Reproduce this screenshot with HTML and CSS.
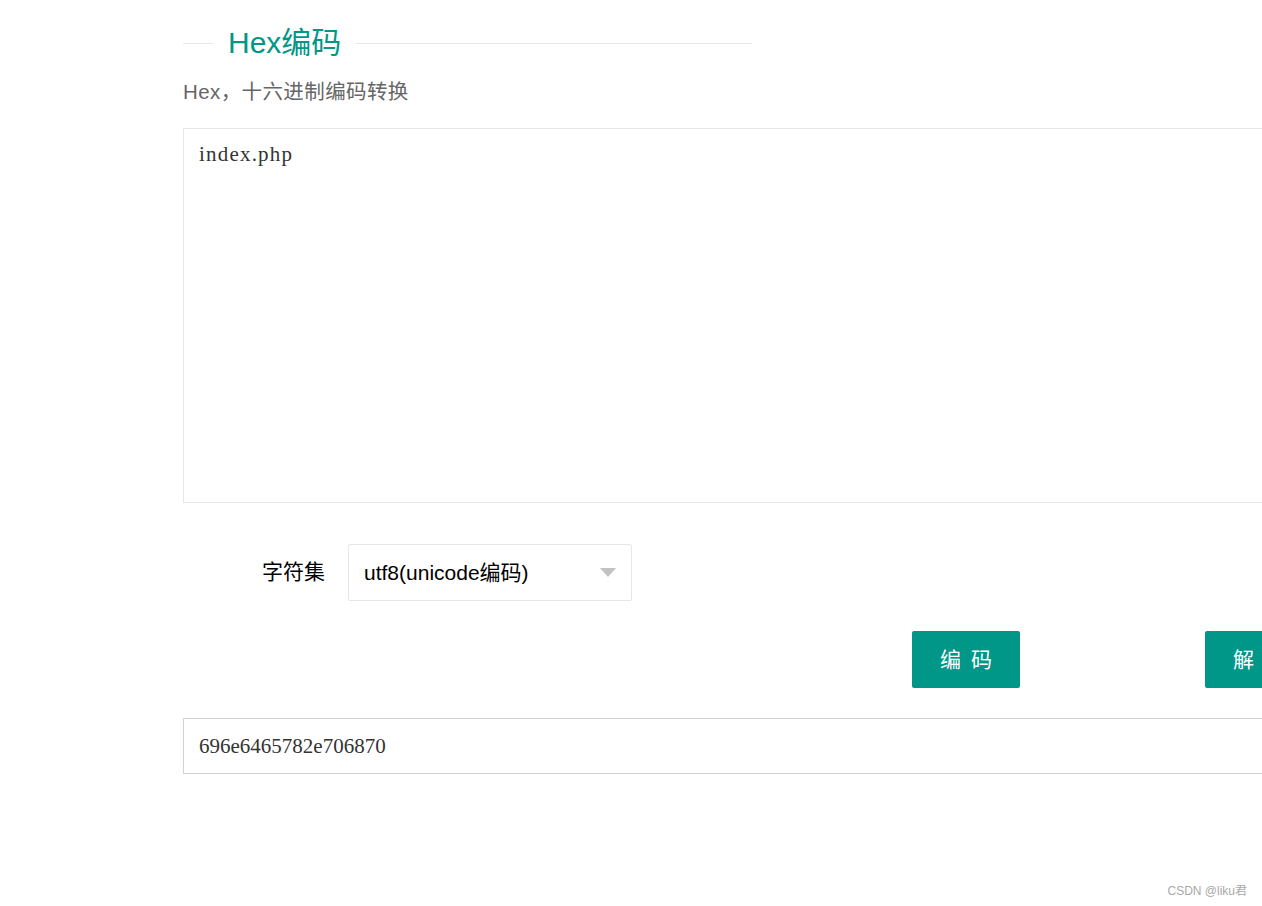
FILE: index.html
```html
<!DOCTYPE html>
<html>
  <head>
    <meta charset="utf-8">
    <link rel="stylesheet" href="styles.css">
    <title>Hex编码</title>
  </head>
  <body>
    <div id="content">
        <div class="legend">
            <span class="legend-line short"></span>
            <h2>Hex编码</h2>
            <span class="legend-line long"></span>
        </div>
        <p class="desc">Hex，十六进制编码转换</p>
        <textarea class="source">index.php</textarea>
        <div class="form-row">
            <label>字符集</label>
            <div class="select">
                <span>utf8(unicode编码)</span>
                <i class="caret"></i>
            </div>
        </div>
        <div class="actions">
            <button class="btn">编 码</button>
            <button class="btn">解 码</button>
        </div>
        <input class="result" value="696e6465782e706870">
    </div>
    <div class="watermark">CSDN @liku君</div>
  </body>
</html>
```

FILE: styles.css
```css
* {
    font-family: "Liberation Sans", "Noto Sans CJK SC", sans-serif;
    box-sizing: border-box;
}

html, body {
    overflow: hidden;
}

body {
    margin: 0;
    background: #fff;
    height: 906px;
}

#content {
    width: 1400px;
    padding: 28px 0 0 183px;
}

.legend {
    display: flex;
    align-items: center;
    width: 569px;
    height: 30px;
}

.legend h2 {
    margin: 0 15px;
    font-size: 30px;
    font-weight: 400;
    line-height: 30px;
    color: #009688;
}

.legend-line {
    height: 1px;
    background-color: #e6e6e6;
}

.legend-line.short {
    width: 30px;
}

.legend-line.long {
    flex: 1;
}

.desc {
    margin: 22px 0 0;
    font-size: 20.5px;
    letter-spacing: 0.4px;
    line-height: 24px;
    color: #666;
}

.source {
    display: block;
    margin-top: 24px;
    width: 1200px;
    height: 375px;
    padding: 14px 15px;
    border: 1px solid #e6e6e6;
    resize: none;
    outline: none;
    font-family: "Liberation Serif", serif;
    font-size: 21px;
    letter-spacing: 1.2px;
    line-height: 22px;
    color: #333;
}

.form-row {
    display: flex;
    align-items: center;
    margin-top: 41px;
}

.form-row label {
    width: 142px;
    margin: 0 23px 5px 0;
    text-align: right;
    font-size: 21px;
    color: #000;
}

.select {
    display: flex;
    align-items: center;
    justify-content: space-between;
    width: 284px;
    height: 57px;
    padding: 0 15px;
    border: 1px solid #e6e6e6;
    border-radius: 2px;
    font-size: 21px;
    color: #000;
}

.select span {
    margin-bottom: 4px;
}

.caret {
    width: 0;
    height: 0;
    border-style: solid;
    border-width: 9px 8.5px 0;
    border-color: #c2c2c2 transparent transparent;
}

.actions {
    display: flex;
    margin: 30px 0 0 729px;
    gap: 185px;
}

.btn {
    width: 108px;
    height: 57px;
    padding: 0 0 4px;
    border: none;
    border-radius: 2px;
    background-color: #009688;
    color: #fff;
    font-size: 21px;
    word-spacing: 4px;
    white-space: nowrap;
    cursor: pointer;
    flex-shrink: 0;
}

.result {
    display: block;
    margin-top: 30px;
    width: 1200px;
    height: 56px;
    padding: 0 15px;
    border: 1px solid #d2d2d2;
    outline: none;
    font-family: "Liberation Serif", serif;
    font-size: 21px;
    color: #333;
}

.watermark {
    position: absolute;
    right: 15px;
    bottom: 8px;
    font-size: 12px;
    color: #a8a8a8;
}
```
